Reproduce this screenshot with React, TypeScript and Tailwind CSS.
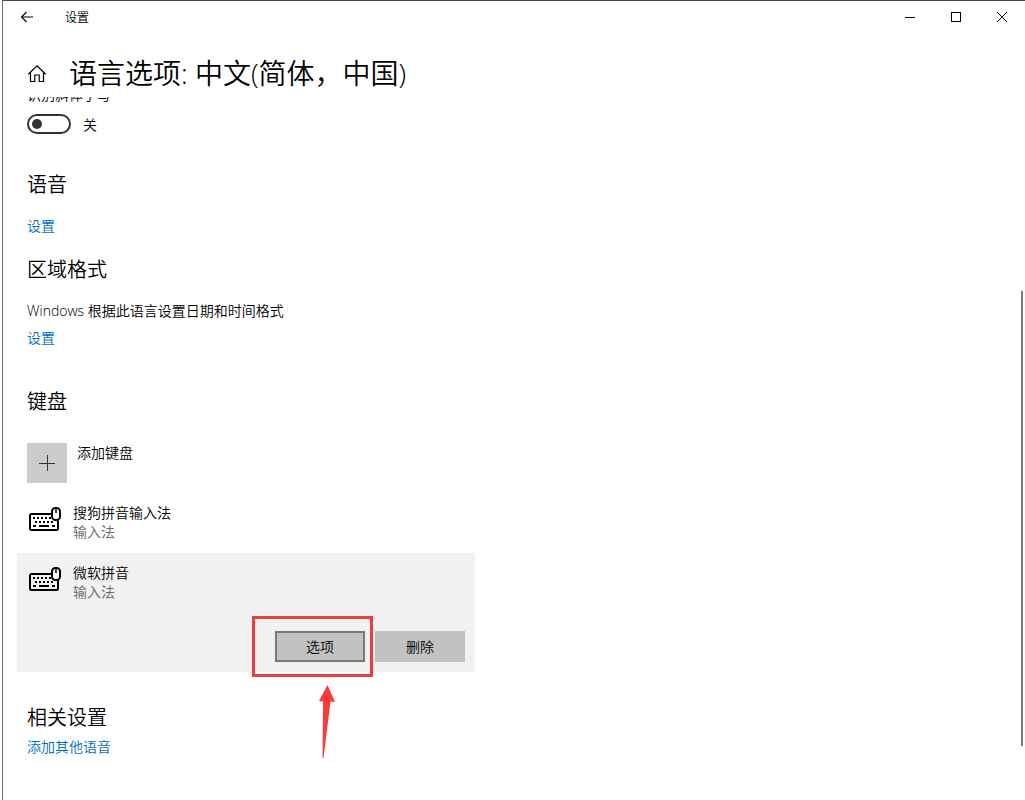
import { useState, type ReactNode } from "react";

function KeyboardIcon() {
  return (
    <svg width="34" height="28" viewBox="0 0 34 28" fill="none" aria-hidden="true" className="shrink-0">
      <rect x="3" y="9" width="28" height="16" rx="1.5" stroke="#000" strokeWidth="2" />
      <g stroke="#000" strokeWidth="2">
        <path d="M6 13h2M10 13h2M14 13h2M18 13h2M22 13h2" />
        <path d="M8 17h2M12 17h2M16 17h2M20 17h2M24 17h2" />
        <path d="M6 21h3M12 21h10M25 21h3" />
      </g>
      <rect x="25" y="3" width="8" height="12" rx="3.5" fill="#fff" stroke="#000" strokeWidth="2" />
      <path d="M29 3v5" stroke="#000" strokeWidth="1.5" />
    </svg>
  );
}

function Heading({ children }: { children: ReactNode }) {
  return <h2 className="text-xl leading-[30px] font-[350]">{children}</h2>;
}

function SettingsLink({ children }: { children: ReactNode }) {
  return (
    <a href="#" className="block w-fit text-sm leading-5 text-[#0070c0]">
      {children}
    </a>
  );
}

function InputMethod({ name }: { name: string }) {
  return (
    <div className="flex h-[60px] gap-2.5 py-2.5 pl-2.5">
      <div className="w-9 shrink-0 pt-0.5">
        <KeyboardIcon />
      </div>
      <div className="text-sm leading-[19px]">
        <p>{name}</p>
        <p className="text-[#666666]">输入法</p>
      </div>
    </div>
  );
}

export default function App() {
  const [on, setOn] = useState(false);
  return (
    <div className="min-h-screen bg-white pl-[2px] font-['Open_Sans','Noto_Sans_CJK_SC',sans-serif] font-[350] text-black">
      <div className="relative flex min-h-screen flex-col border-t border-l border-t-[#4a4a4a] border-l-[#6a6a6a]">
        <header className="flex h-8 items-center justify-between">
          <div className="flex items-center gap-[31px] pl-[17px]">
            <button type="button" aria-label="返回">
              <svg width="14" height="14" viewBox="0 0 14 14" fill="none" stroke="#000" strokeWidth="1.1">
                <path d="M13 7H1.5M6.5 2L1.5 7l5 5" />
              </svg>
            </button>
            <span className="pt-0.5 text-xs leading-4">设置</span>
          </div>
          <div className="flex">
            <button type="button" aria-label="最小化" className="flex h-8 w-[46px] items-center justify-center">
              <svg width="10" height="10" viewBox="0 0 10 10" stroke="#000">
                <path d="M0 5.5h10" />
              </svg>
            </button>
            <button type="button" aria-label="最大化" className="flex h-8 w-[46px] items-center justify-center">
              <svg width="10" height="10" viewBox="0 0 10 10" fill="none" stroke="#000">
                <rect x="0.5" y="0.5" width="9" height="9" />
              </svg>
            </button>
            <button type="button" aria-label="关闭" className="flex h-8 w-[46px] items-center justify-center">
              <svg width="10" height="10" viewBox="0 0 10 10" stroke="#000">
                <path d="M0 0l10 10M10 0L0 10" />
              </svg>
            </button>
          </div>
        </header>

        <div className="flex h-16 items-center gap-[22px] pt-5 pb-1 pl-6">
          <a href="#" aria-label="主页">
            <svg width="20" height="20" viewBox="0 0 20 20" fill="none" stroke="#000" strokeWidth="1.2">
              <path d="M1.300 11.200L10 2.800l8.700 8.400" />
              <path d="M3.500 9.200v9.300h4.300v-6.500h4.400v6.500h4.300V9.200" />
            </svg>
          </a>
          <h1 className="text-[28px] leading-10 font-[350]">语言选项: 中文(简体，中国)</h1>
        </div>

        <main className="flex-1 overflow-hidden pb-10 pl-6">
          <p id="slant" className="-mt-3 text-sm leading-5">
            识别斜体手写
          </p>
          <div className="mt-[9px] flex h-5 items-center gap-3">
            <button
              type="button"
              role="switch"
              aria-checked={on}
              aria-labelledby="slant"
              onClick={() => setOn(!on)}
              className={
                on
                  ? "flex h-5 w-11 items-center justify-end rounded-full border-2 border-[#0070c0] bg-[#0070c0] px-1"
                  : "flex h-5 w-11 items-center rounded-full border-2 border-[#333333] px-[3px]"
              }
            >
              <span className={on ? "size-2.5 rounded-full bg-white" : "size-2.5 rounded-full bg-[#333333]"} />
            </button>
            <span className="pt-0.5 text-sm leading-5">{on ? "开" : "关"}</span>
          </div>

          <section className="mt-9 flex flex-col gap-4">
            <Heading>语音</Heading>
            <SettingsLink>设置</SettingsLink>
          </section>

          <section className="mt-[19px]">
            <Heading>区域格式</Heading>
            <p className="mt-4 mb-[7px] text-sm leading-5">Windows 根据此语言设置日期和时间格式</p>
            <SettingsLink>设置</SettingsLink>
          </section>

          <section className="mt-[39px]">
            <Heading>键盘</Heading>
            <button type="button" className="mt-[26px] flex gap-2.5 text-left">
              <span className="flex size-10 items-center justify-center bg-[#cccccc]">
                <svg width="16" height="16" viewBox="0 0 16 16" stroke="#333">
                  <path d="M0 8.500h16M8.500 0v16" />
                </svg>
              </span>
              <span className="text-sm leading-5">添加键盘</span>
            </button>
            <div className="mt-2.5 -ml-2.5 max-w-[458px]">
              <InputMethod name="搜狗拼音输入法" />
              <div className="relative bg-[#f1f1f1] pb-2.5">
                <InputMethod name="微软拼音" />
                <div className="mt-[18px] flex justify-end gap-2.5 pr-2.5 text-sm leading-5">
                  <button type="button" className="h-[31px] w-[90px] border-2 border-[#7a7a7a] bg-[#c2c2c2]">
                    选项
                  </button>
                  <button type="button" className="h-[31px] w-[90px] bg-[#c2c2c2]">
                    删除
                  </button>
                </div>
                <div className="pointer-events-none absolute right-[102px] -bottom-[5px] h-[61px] w-[121px] border-[3px] border-[#e8403f]" />
                <svg
                  width="18"
                  height="74"
                  viewBox="0 0 18 74"
                  aria-hidden="true"
                  className="pointer-events-none absolute right-[139px] top-[132px]"
                >
                  <path d="M9.500 0L17 17l-4.500-.5L5.500 73h-1L5 16.500 1 16z" fill="#fb3b3b" />
                </svg>
              </div>
            </div>
          </section>

          <section className="mt-[31px] flex flex-col gap-1">
            <Heading>相关设置</Heading>
            <SettingsLink>添加其他语音</SettingsLink>
          </section>
        </main>

        <div className="absolute top-[290px] right-[2px] bottom-[54px] w-[2px] bg-[#7a7a7a]" />
      </div>
    </div>
  );
}
